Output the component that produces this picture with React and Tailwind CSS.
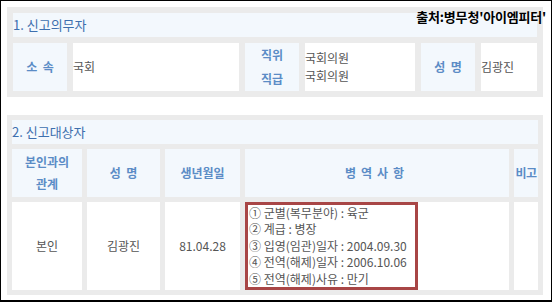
export default function App() {
  const font = { fontFamily: '"Malgun Gothic", "Noto Sans CJK KR", sans-serif' }
  const label = 'bg-[#f3f8fd] flex items-center justify-center text-center font-bold text-[12px] text-[#5b8cc6]'
  const value = 'bg-white flex items-center text-[12px] text-[#555]'
  const history = [
    '① 군별(복무분야) : 육군',
    '② 계급 : 병장',
    '③ 입영(임관)일자 : 2004.09.30',
    '④ 전역(해제)일자 : 2006.10.06',
    '⑤ 전역(해제)사유 : 만기',
  ]

  return (
    <div className="relative w-[552px] h-[303px] bg-white" style={font}>
      <div className="w-[552px] h-[302px] border border-b-2 border-black px-[6px] pt-[6px]">
        {/* 1. 신고의무자 */}
        <div className="w-[536px] bg-[#ebebeb] p-[6px] flex flex-col gap-[6px]">
          <div className="h-[24px] bg-[#f3f8fd] flex items-center text-[13px] text-[#3d6fae]">1. 신고의무자</div>
          <div className="h-[48px] grid grid-cols-[54px_166px_54px_110px_54px_56px] gap-[6px]">
            <div className={label}>소&nbsp;&nbsp;속</div>
            <div className={value}>국회</div>
            <div className={label + ' flex-col leading-[24px]'}>
              <span>직위</span>
              <span>직급</span>
            </div>
            <div className={value + ' flex-col items-start justify-center leading-[18px]'}>
              <span>국회의원</span>
              <span>국회의원</span>
            </div>
            <div className={label}>성&nbsp;&nbsp;명</div>
            <div className={value}>김광진</div>
          </div>
        </div>

        {/* 2. 신고대상자 */}
        <div className="w-[536px] mt-[18px] bg-[#ebebeb] p-[5px] flex flex-col gap-[5px]">
          <div className="h-[24px] bg-[#f3f8fd] flex items-center text-[13px] text-[#3d6fae]">2. 신고대상자</div>
          <div className="h-[48px] grid grid-cols-[70px_73px_75px_264px_24px] gap-[5px]">
            <div className={label + ' flex-col leading-[22px]'}>
              <span>본인과의</span>
              <span>관계</span>
            </div>
            <div className={label}>성&nbsp;&nbsp;명</div>
            <div className={label}>생년월일</div>
            <div className={label + ' tracking-[5px]'}>병역사항</div>
            <div className={label + ' tracking-[-0.5px] whitespace-nowrap'}>비고</div>
          </div>
          <div className="h-[88px] grid grid-cols-[70px_73px_75px_264px_24px] gap-[5px]">
            <div className={value + ' justify-center'}>본인</div>
            <div className={value + ' justify-center'}>김광진</div>
            <div className={value + ' justify-center'}>81.04.28</div>
            <div className="bg-white flex">
              <div className="w-[173px] h-[88px] border-[3px] border-[#a84646] flex flex-col pl-[1px] text-[12px] leading-[16.4px] text-[#555] whitespace-nowrap">
                {history.map((h) => (
                  <span key={h}>{h}</span>
                ))}
              </div>
            </div>
            <div className="bg-white" />
          </div>
        </div>
      </div>

      <div className="absolute top-[7px] right-[6px] text-[13px] font-bold text-black tracking-[-0.2px]">
        출처:병무청'아이엠피터'
      </div>
    </div>
  )
}
